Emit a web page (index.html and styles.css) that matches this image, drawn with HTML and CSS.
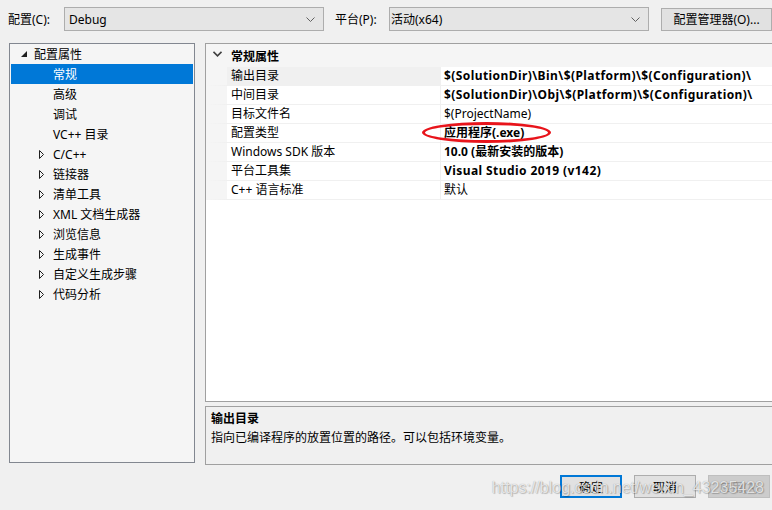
FILE: index.html
```html
<!DOCTYPE html>
<html lang="zh-CN">
<head>
    <meta charset="UTF-8">
    <title>属性页</title>
    <link rel="stylesheet" href="styles.css">
</head>
<body>
    <div class="top-bar">
        <span class="label">配置(C):</span>
        <div class="combo combo-config">
            <span>Debug</span>
            <svg class="combo-arrow" width="9" height="5" viewBox="0 0 9 5"><path d="M0.5 0.5 L4.5 4.5 L8.5 0.5" fill="none" stroke="#606060"/></svg>
        </div>
        <span class="label label-platform">平台(P):</span>
        <div class="combo combo-platform">
            <span>活动(x64)</span>
            <svg class="combo-arrow" width="9" height="5" viewBox="0 0 9 5"><path d="M0.5 0.5 L4.5 4.5 L8.5 0.5" fill="none" stroke="#606060"/></svg>
        </div>
        <button class="btn btn-manager">配置管理器(O)...</button>
    </div>

    <div class="main">
        <div class="tree">
            <div class="tree-row root">
                <svg class="exp" width="6" height="6" viewBox="0 0 6 6"><path d="M6 0 L6 6 L0 6 Z" fill="#1e1e1e"/></svg>
                <span>配置属性</span>
            </div>
            <div class="tree-row child selected"><span>常规</span></div>
            <div class="tree-row child"><span>高级</span></div>
            <div class="tree-row child"><span>调试</span></div>
            <div class="tree-row child"><span>VC++ 目录</span></div>
            <div class="tree-row child collapsed"><svg class="col" width="5" height="9" viewBox="0 0 5 9"><path d="M0.5 0.5 L4.5 4.5 L0.5 8.5 Z" fill="none" stroke="#1e1e1e"/></svg><span>C/C++</span></div>
            <div class="tree-row child collapsed"><svg class="col" width="5" height="9" viewBox="0 0 5 9"><path d="M0.5 0.5 L4.5 4.5 L0.5 8.5 Z" fill="none" stroke="#1e1e1e"/></svg><span>链接器</span></div>
            <div class="tree-row child collapsed"><svg class="col" width="5" height="9" viewBox="0 0 5 9"><path d="M0.5 0.5 L4.5 4.5 L0.5 8.5 Z" fill="none" stroke="#1e1e1e"/></svg><span>清单工具</span></div>
            <div class="tree-row child collapsed"><svg class="col" width="5" height="9" viewBox="0 0 5 9"><path d="M0.5 0.5 L4.5 4.5 L0.5 8.5 Z" fill="none" stroke="#1e1e1e"/></svg><span>XML 文档生成器</span></div>
            <div class="tree-row child collapsed"><svg class="col" width="5" height="9" viewBox="0 0 5 9"><path d="M0.5 0.5 L4.5 4.5 L0.5 8.5 Z" fill="none" stroke="#1e1e1e"/></svg><span>浏览信息</span></div>
            <div class="tree-row child collapsed"><svg class="col" width="5" height="9" viewBox="0 0 5 9"><path d="M0.5 0.5 L4.5 4.5 L0.5 8.5 Z" fill="none" stroke="#1e1e1e"/></svg><span>生成事件</span></div>
            <div class="tree-row child collapsed"><svg class="col" width="5" height="9" viewBox="0 0 5 9"><path d="M0.5 0.5 L4.5 4.5 L0.5 8.5 Z" fill="none" stroke="#1e1e1e"/></svg><span>自定义生成步骤</span></div>
            <div class="tree-row child collapsed"><svg class="col" width="5" height="9" viewBox="0 0 5 9"><path d="M0.5 0.5 L4.5 4.5 L0.5 8.5 Z" fill="none" stroke="#1e1e1e"/></svg><span>代码分析</span></div>
        </div>

        <div class="right">
            <div class="grid">
                <div class="grid-header">
                    <svg class="chev" width="9" height="6" viewBox="0 0 9 6"><path d="M0.5 0.8 L4.5 4.8 L8.5 0.8" fill="none" stroke="#404040" stroke-width="1.6"/></svg>
                    <span>常规属性</span>
                </div>
                <div class="prop active"><div class="name">输出目录</div><div class="value bold path">$(SolutionDir)\Bin\$(Platform)\$(Configuration)\</div></div>
                <div class="prop"><div class="name">中间目录</div><div class="value bold path">$(SolutionDir)\Obj\$(Platform)\$(Configuration)\</div></div>
                <div class="prop"><div class="name">目标文件名</div><div class="value">$(ProjectName)</div></div>
                <div class="prop"><div class="name">配置类型</div><div class="value bold marked">应用程序(.exe)<span class="ring"></span></div></div>
                <div class="prop"><div class="name">Windows SDK 版本</div><div class="value bold">10.0 (最新安装的版本)</div></div>
                <div class="prop"><div class="name">平台工具集</div><div class="value bold path">Visual Studio 2019 (v142)</div></div>
                <div class="prop"><div class="name">C++ 语言标准</div><div class="value">默认</div></div>
            </div>
            <div class="desc">
                <div class="desc-title">输出目录</div>
                <div class="desc-text">指向已编译程序的放置位置的路径。可以包括环境变量。</div>
            </div>
        </div>
    </div>

    <div class="buttons">
        <button class="btn btn-ok">确定</button>
        <button class="btn">取消</button>
        <button class="btn btn-disabled">应用(A)</button>
        <span class="watermark">https://blog.csdn.net/weixin_43235428</span>
    </div>
</body>
</html>
```

FILE: styles.css
```css
* {
    box-sizing: border-box;
    margin: 0;
    padding: 0;
}

body {
    width: 772px;
    height: 510px;
    background: #f0f0f0;
    font-family: 'Segoe UI', 'Noto Sans', 'Noto Sans CJK SC', sans-serif;
    font-size: 12px;
    color: #000;
    overflow: hidden;
}

.top-bar {
    display: flex;
    align-items: center;
    height: 38px;
    padding: 0 0 0 8px;
}

.label {
    width: 56px;
}

.label-platform {
    margin-left: 11px;
    width: 54px;
}

.combo {
    display: flex;
    align-items: center;
    justify-content: space-between;
    width: 260px;
    height: 24px;
    background: #e5e5e5;
    border: 1px solid #adadad;
    padding: 0 8px 0 4px;
}

.combo-platform span {
    margin-left: -3px;
}

.btn {
    font-family: inherit;
    font-size: 12px;
    height: 23px;
    background: #e1e1e1;
    border: 1px solid #adadad;
    color: #000;
}

.btn-manager {
    width: 111px;
    margin-left: 12px;
}

.main {
    display: flex;
    gap: 10px;
    padding: 5px 0 0 9px;
}

.tree {
    width: 186px;
    height: 420px;
    background: #f5f5f5;
    border: 1px solid #828790;
    padding: 0 1px;
}

.tree-row {
    display: flex;
    align-items: center;
    height: 20px;
    position: relative;
}

.tree-row.root {
    padding-left: 10px;
}

.tree-row.root .exp {
    margin-right: 7px;
}

.tree-row.child {
    padding-left: 42px;
}

.tree-row.selected {
    background: #0078d7;
    color: #fff;
}

.tree-row .col {
    position: absolute;
    left: 28px;
    top: 6px;
}

.right {
    display: flex;
    flex-direction: column;
    gap: 4px;
    width: 567px;
}

.grid {
    height: 359px;
    background: #fff;
    border: 1px solid #a0a0a0;
    border-right: none;
}

.grid-header {
    display: flex;
    align-items: center;
    height: 23px;
    background: #f5f5f5;
    font-weight: bold;
    padding: 0 0 0 7px;
}

.grid-header .chev {
    margin: 0 9px 3px 0;
}

.prop {
    display: flex;
    height: 19px;
    border-left: 21px solid #f5f5f5;
    border-bottom: 1px solid #f0f0f0;
}

.prop .name {
    width: 214px;
    padding-left: 4px;
    line-height: 18px;
    border-right: 1px solid #f0f0f0;
}

.prop.active .name {
    background: #f0f0f0;
}

.prop .value {
    padding-left: 3px;
    line-height: 18px;
    white-space: nowrap;
}

.bold {
    font-weight: bold;
}

.path {
    letter-spacing: 0.42px;
}

.marked {
    position: relative;
}

.ring {
    position: absolute;
    left: -19px;
    top: -2px;
    width: 129px;
    height: 21px;
    border: 3.5px solid #e8141b;
    border-radius: 50%;
}

.desc {
    height: 59px;
    background: #f0f0f0;
    border: 1px solid #a0a0a0;
    border-right: none;
    padding: 2px 5px;
}

.desc-title {
    font-weight: bold;
    line-height: 19px;
}

.desc-text {
    line-height: 19px;
}

.buttons {
    display: flex;
    gap: 12px;
    justify-content: flex-end;
    padding: 10px 2px 0 0;
    position: relative;
}

.buttons .btn {
    width: 62px;
}

.btn-ok {
    border: 2px solid #0078d7;
}

.btn-disabled {
    background: #cccccc;
    border-color: #bfbfbf;
    color: #a0a0a0;
}

.watermark {
    position: absolute;
    right: 8px;
    top: 14px;
    font-family: 'Liberation Sans', Arial, sans-serif;
    font-size: 16px;
    color: rgba(255, 255, 255, 0.75);
    text-shadow: 0 0 1px rgba(0, 0, 0, 0.35), 1px 1px 1px rgba(0, 0, 0, 0.2);
    pointer-events: none;
}
```
